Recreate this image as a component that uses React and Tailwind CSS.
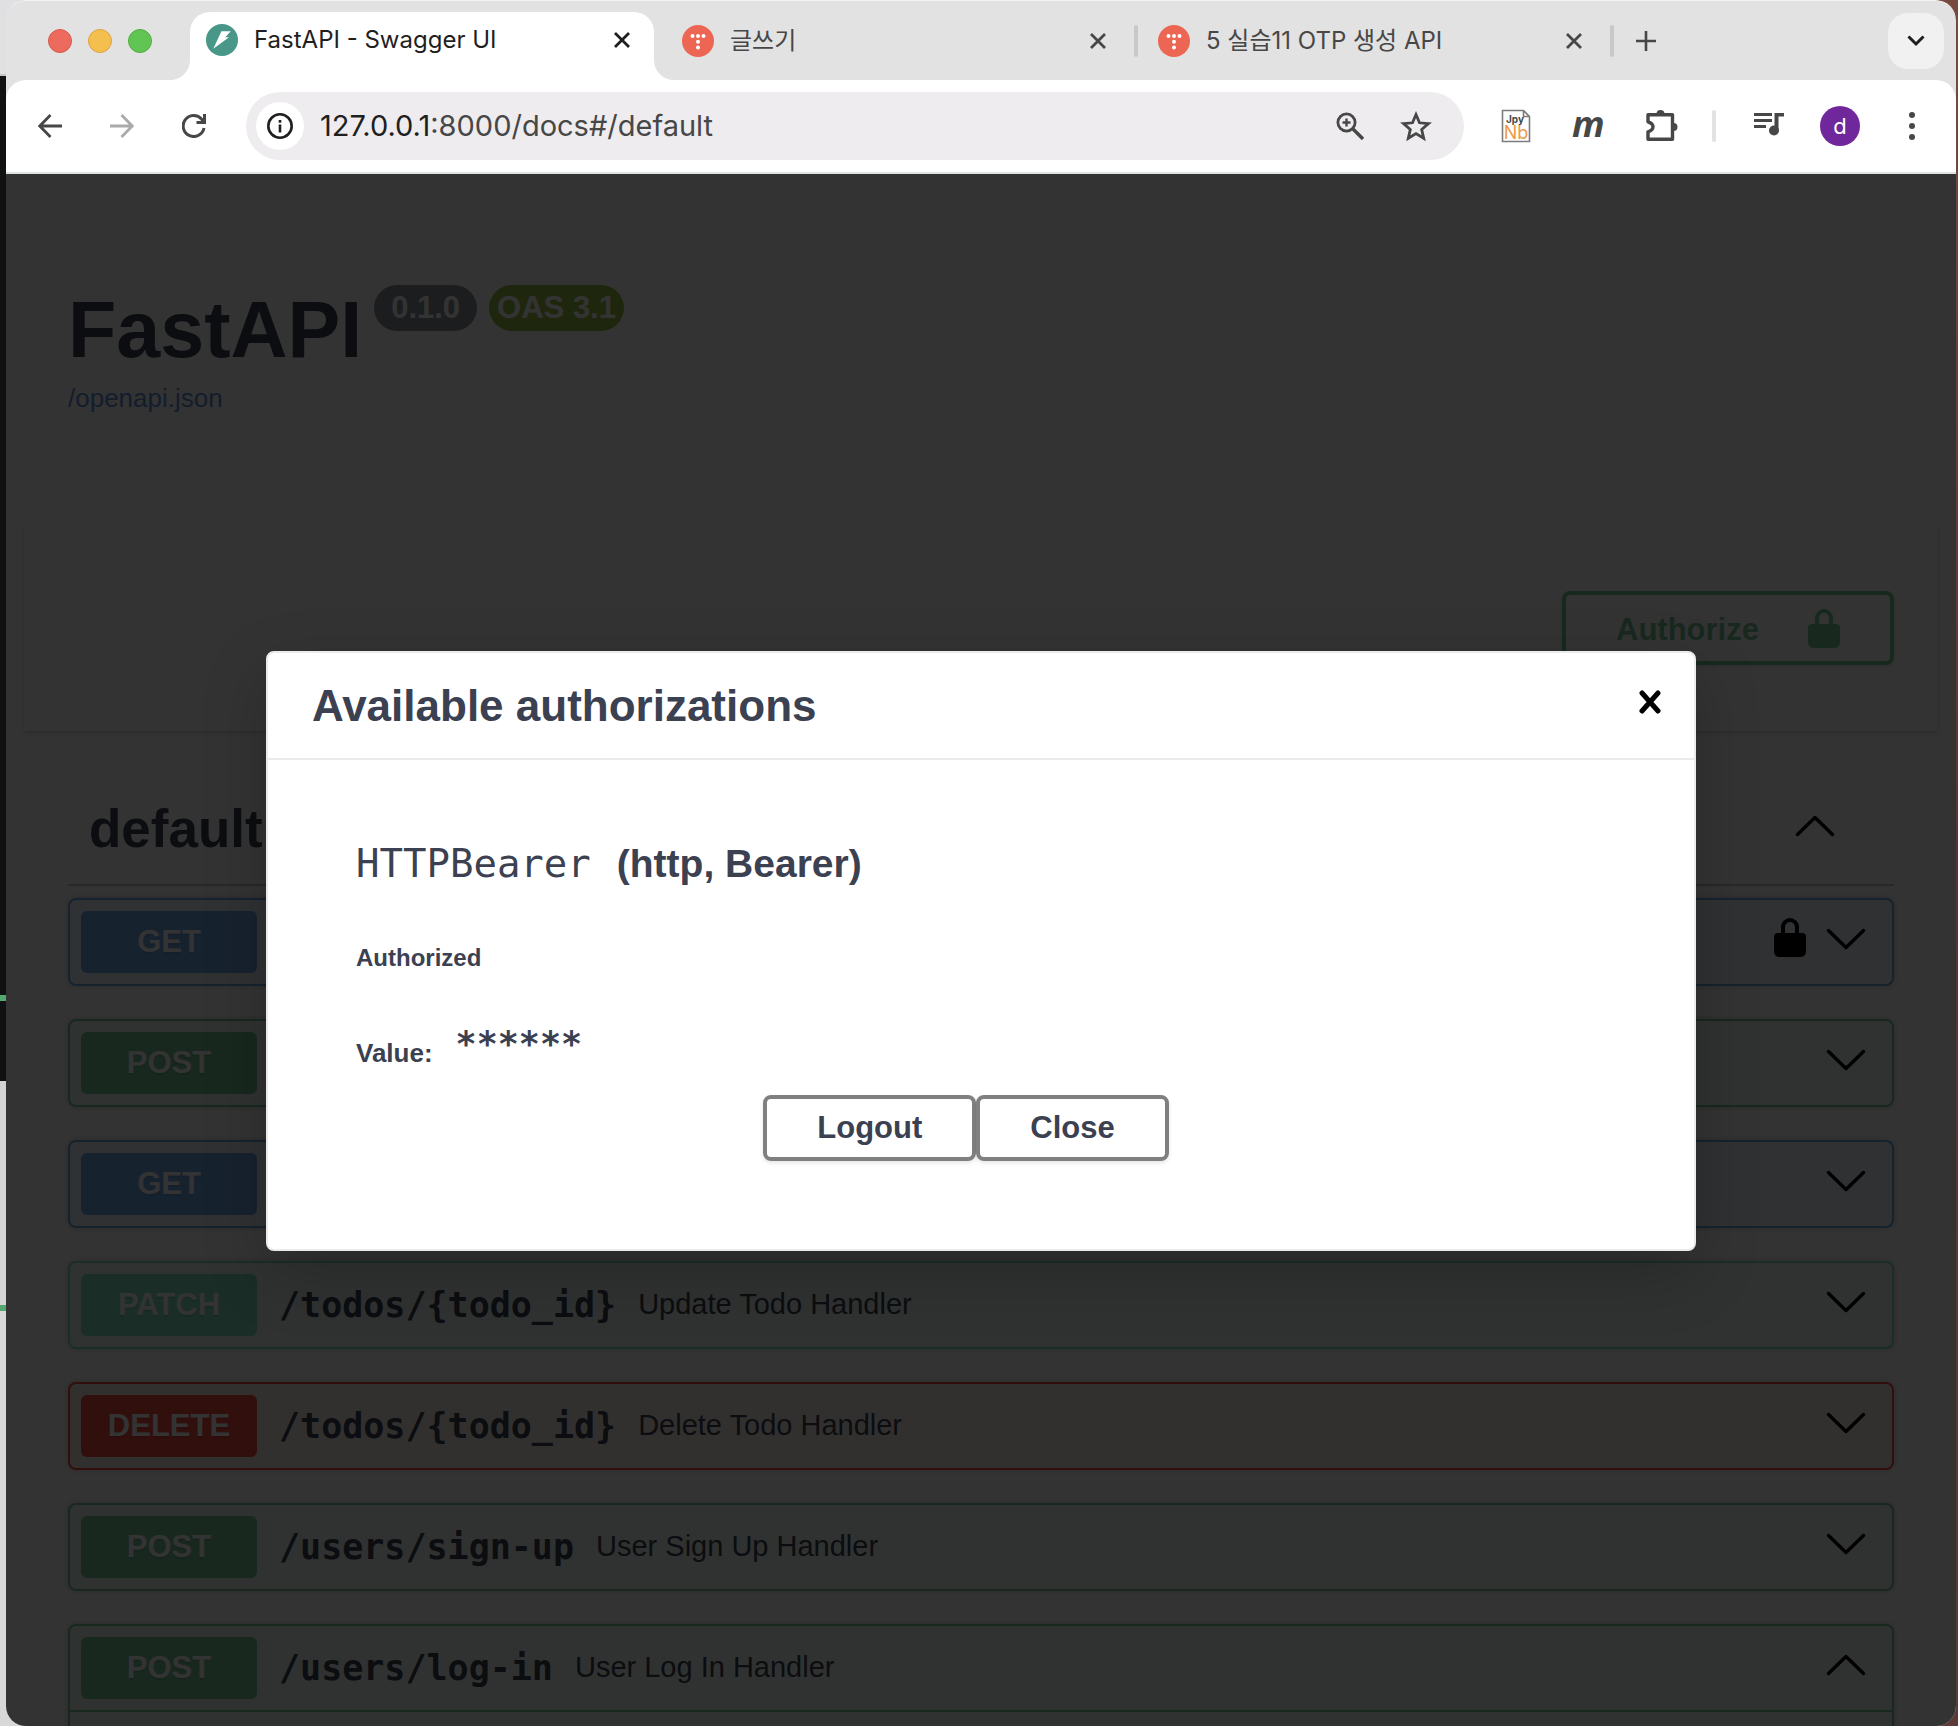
// the first three rows sit behind the dialog, only their badges show
const ENDPOINTS = [
  { method: "GET", locked: true },
  { method: "POST" },
  { method: "GET" },
  { method: "PATCH", path: "/todos/{todo_id}", summary: "Update Todo Handler" },
  { method: "DELETE", path: "/todos/{todo_id}", summary: "Delete Todo Handler" },
  { method: "POST", path: "/users/sign-up", summary: "User Sign Up Handler" },
  { method: "POST", path: "/users/log-in", summary: "User Log In Handler", open: true },
];

const METHOD_STYLES = {
  GET: { box: "border-[#73aaeb] bg-[#ebf3fb]", badge: "bg-[#73aaeb]" },
  POST: { box: "border-[#78c896] bg-[#eff8f2]", badge: "bg-[#78c896]" },
  PATCH: { box: "border-[#82dfc3] bg-[#eef9f6]", badge: "bg-[#82dfc3]" },
  DELETE: { box: "border-[#f04b41] bg-[#faf0e6]", badge: "bg-[#f04b41]" },
};

function CloseIcon({ className }) {
  return (
    <svg viewBox="0 0 16 16" className={className} fill="none" stroke="currentColor" strokeWidth="2.8">
      <path d="M1 1l14 14M15 1L1 15" />
    </svg>
  );
}

function Chevron({ up = false }) {
  return (
    <svg viewBox="0 0 40 22" className="h-[22px] w-10" fill="none" stroke="black" strokeWidth="3.4" strokeLinecap="round" strokeLinejoin="round">
      <path d={up ? "M2.5 19.5L20 2.5l17.5 17" : "M2.5 2.5L20 19.5l17.5-17"} />
    </svg>
  );
}

function Lock({ className }) {
  return (
    <svg viewBox="0 0 32 40" className={className} fill="currentColor">
      <path d="M7 16V10a9 9 0 0 1 18 0v6h3a4 4 0 0 1 4 4v14q0 6-6 6H6q-6 0-6-6V20a4 4 0 0 1 4-4zM11 16h10V10a5 5 0 0 0-10 0z" />
    </svg>
  );
}

function FastApiIcon() {
  return (
    <svg viewBox="0 0 32 32" className="size-8 shrink-0">
      <circle cx="16" cy="16" r="16" fill="#489789" />
      <path d="M15.400 7.300h9.400l-5.800 6h4L7.300 24.800z" fill="white" />
      <path d="M18.200 10.400h3.600l-2.800 2.900z" fill="white" />
    </svg>
  );
}

function TistoryIcon() {
  return (
    <svg viewBox="0 0 32 32" className="size-8 shrink-0">
      <circle cx="16" cy="16" r="16" fill="#ed6653" />
      <g fill="white">
        <circle cx="10.500" cy="11" r="2" />
        <circle cx="16" cy="11" r="2" />
        <circle cx="21.500" cy="11" r="2" />
        <circle cx="16" cy="16.800" r="2" />
        <circle cx="16" cy="22.500" r="2" />
      </g>
    </svg>
  );
}

function Tab({ icon, title }) {
  return (
    <div className="flex h-8 min-w-0 flex-1 items-center pl-5">
      {icon}
      <span className="ml-4 flex-1 truncate text-[#474747]">{title}</span>
      <button type="button" aria-label="Close tab" className="text-[#474747]">
        <CloseIcon className="size-4" />
      </button>
      <span className="ml-7 h-8 w-1 rounded-full bg-[#c8c8c8]" />
    </div>
  );
}

function TabStrip() {
  return (
    <div className="flex h-20 items-center rounded-t-[20px] border-t border-[#f4f4f4] bg-[#e2e2e2] pr-3 pl-[42px] font-[Inter,'Noto_Sans_CJK_KR',sans-serif] text-[24px]">
      <div className="mr-[38px] flex gap-4">
        <span className="size-6 rounded-full border border-[#d8594c] bg-[#ec6a5e]" />
        <span className="size-6 rounded-full border border-[#dba441] bg-[#f5bf4f]" />
        <span className="size-6 rounded-full border border-[#50ae3e] bg-[#61c554]" />
      </div>
      <div className="relative flex h-[68px] w-[464px] items-center self-end rounded-t-[20px] bg-white pr-6 pb-3 pl-4 text-[#1f1f1f]">
        {/* curved feet of the active tab */}
        <svg viewBox="0 0 20 20" className="absolute bottom-0 -left-5 size-5" fill="white">
          <path d="M20 0v20H0A20 20 0 0 0 20 0z" />
        </svg>
        <svg viewBox="0 0 20 20" className="absolute -right-5 bottom-0 size-5" fill="white">
          <path d="M0 0v20h20A20 20 0 0 1 0 0z" />
        </svg>
        <FastApiIcon />
        <span className="ml-4 flex-1 truncate">FastAPI - Swagger UI</span>
        <button type="button" aria-label="Close tab">
          <CloseIcon className="size-4" />
        </button>
      </div>
      <div className="ml-2 flex max-w-[952px] flex-1">
        <Tab icon={<TistoryIcon />} title="글쓰기" />
        <Tab icon={<TistoryIcon />} title="5 실습11 OTP 생성 API" />
      </div>
      <button type="button" aria-label="New tab" className="ml-[22px] text-[#474747]">
        <svg viewBox="0 0 20 20" className="size-5" fill="none" stroke="currentColor" strokeWidth="2.600">
          <path d="M10 0v20M0 10h20" />
        </svg>
      </button>
      <button type="button" aria-label="Search tabs" className="ml-auto flex size-14 items-center justify-center rounded-[20px] bg-[#f1f1f1]">
        <svg viewBox="0 0 18 12" className="h-3 w-[18px]" fill="none" stroke="#1f1f1f" strokeWidth="3">
          <path d="M1.500 1.500L9 9l7.500-7.500" />
        </svg>
      </button>
    </div>
  );
}

function Toolbar() {
  return (
    <div className="bg-[#e2e2e2]">
      <div className="flex h-[94px] items-center rounded-t-[20px] border-b-2 border-[#dfe3df] bg-white pr-[30px] pl-8 text-[#474747]">
        <button type="button" aria-label="Back">
          <svg viewBox="0 0 24 24" className="size-6" fill="none" stroke="currentColor" strokeWidth="2.800">
            <path d="M24 12H2M12.500 1L1.800 12l10.700 11" />
          </svg>
        </button>
        <button type="button" aria-label="Forward" className="ml-12 text-[#aaa]">
          <svg viewBox="0 0 24 24" className="size-6" fill="none" stroke="currentColor" strokeWidth="2.800">
            <path d="M0 12h22M11.500 1l10.700 11-10.700 11" />
          </svg>
        </button>
        <button type="button" aria-label="Reload" className="ml-12">
          <svg viewBox="0 0 24 24" className="size-6" fill="none" stroke="currentColor" strokeWidth="3">
            <path d="M22 14A10.500 10.500 0 1 1 19.500 5l2.500 3M22.500 0v8.500h-8" />
          </svg>
        </button>
        <div className="ml-10 flex h-[68px] flex-1 items-center rounded-full bg-[#eeecee] pr-8 pl-[10px]">
          <button type="button" aria-label="View site information" className="flex size-12 items-center justify-center rounded-full bg-white text-[#1f1f1f]">
            <svg viewBox="0 0 26 26" className="size-[26px]" fill="none" stroke="currentColor" strokeWidth="2.600">
              <circle cx="13" cy="13" r="11.700" />
              <path d="M13 11.500v8M13 7v2.800" />
            </svg>
          </button>
          <div className="ml-4 flex-1 font-[Inter,sans-serif] text-[29px]">
            <span className="text-[#1f1f1f]">127.0.0.1</span>:8000/docs#/default
          </div>
          <button type="button" aria-label="Zoom">
            <svg viewBox="0 0 28 28" className="size-7" fill="none" stroke="currentColor" strokeWidth="2.800">
              <circle cx="10.500" cy="10.500" r="8.600" />
              <path d="M17 17l10 10" strokeWidth="3.400" />
              <path d="M10.500 6.500v8M6.500 10.500h8" strokeWidth="2.400" />
            </svg>
          </button>
          <button type="button" aria-label="Bookmark this tab" className="ml-9">
            <svg viewBox="0 0 32 32" className="size-8" fill="none" stroke="currentColor" strokeWidth="2.800">
              <path d="M16 4.500l3.500 8.300 9 .8-6.800 5.900 2 8.800-7.700-4.700-7.700 4.700 2-8.800-6.800-5.900 9-.8z" />
            </svg>
          </button>
        </div>
        <div className="ml-9 flex items-center">
          <svg viewBox="0 0 32 34" className="h-[34px] w-8 font-[Inter,sans-serif]">
            <path d="M2.500 1.500h21l6 6v25h-27zM23.500 1.500v6h6" fill="white" stroke="#7c7c7c" strokeWidth="1.600" />
            <text x="15" y="14" fontSize="10" fontWeight="700" textAnchor="middle" fill="#474747">Jpy</text>
            <text x="16" y="30" fontSize="18" textAnchor="middle" fill="#ee9a45">Nb</text>
          </svg>
          <span className="ml-10 w-8 pb-1 text-center font-['Open_Sans',sans-serif] text-[36px] leading-9 font-bold italic">m</span>
          <button type="button" aria-label="Extensions" className="ml-10">
            <svg viewBox="0 0 36 34" className="h-[34px] w-9" fill="none" stroke="currentColor" strokeWidth="3.400">
              <path d="M4 5.800h24.500v24.500H4v-7.500q5-1.500 5-5t-5-5z" strokeLinejoin="round" />
              <path d="M12.500 5a4 4 0 0 1 8 0zM29.500 14a4 4 0 0 1 0 8z" fill="currentColor" stroke="none" />
            </svg>
          </button>
          <span className="ml-8 h-8 w-1 rounded-full bg-[#e2e2e2]" />
          <button type="button" aria-label="Media controls" className="ml-[38px]">
            <svg viewBox="0 0 30 28" className="h-7 w-[30px]" fill="currentColor">
              <path d="M0 1h18v3H0zM0 7h18v3H0zM0 13h12v3H0zM20.500 1H30v3.500h-5.500V18h-4z" />
              <circle cx="20" cy="18.500" r="5" />
            </svg>
          </button>
          <button type="button" aria-label="Profile" className="ml-9 size-10 rounded-full bg-[#70279b] font-[Inter,sans-serif] text-[22px] text-white">
            d
          </button>
          <button type="button" aria-label="Menu" className="ml-[38px]">
            <svg viewBox="0 0 28 28" className="size-7" fill="currentColor">
              <circle cx="14" cy="3" r="3" />
              <circle cx="14" cy="14" r="3" />
              <circle cx="14" cy="25" r="3" />
            </svg>
          </button>
        </div>
      </div>
    </div>
  );
}

function Endpoint({ method, path, summary, locked, open }) {
  const style = METHOD_STYLES[method];
  return (
    <div className={`rounded-lg border-2 shadow-[0_0_6px_rgba(0,0,0,0.19)] ${style.box} ${open ? "h-40" : "h-[88px]"}`}>
      <div className={`flex items-center pr-[26px] pl-[11px] ${open ? "h-[86px] border-b-2 border-[#78c896]" : "h-[84px]"}`}>
        <span className={`w-44 shrink-0 rounded-md text-center text-[31px] leading-[62px] font-bold text-white [text-shadow:0_2px_0_rgba(0,0,0,0.1)] ${style.badge}`}>
          {method}
        </span>
        {path && <span className="ml-[22px] font-['DejaVu_Sans_Mono',monospace] text-[35px] font-bold">{path}</span>}
        {summary && <span className="ml-[22px] text-[29px]">{summary}</span>}
        <div className="ml-auto flex items-center gap-5 pb-[6px]">
          {locked && <Lock className="mb-1 h-10 w-8 text-black" />}
          <button type="button" aria-label={open ? "Collapse" : "Expand"}>
            <Chevron up={open} />
          </button>
        </div>
      </div>
    </div>
  );
}

function SwaggerPage() {
  return (
    <div className="pt-[111px] text-[#3b4151]">
      <div className="flex items-start px-[62px]">
        <h1 className="text-[79px] leading-[90px] font-bold">FastAPI</h1>
        <span className="ml-3 rounded-full bg-[#8c9196] px-[17px] text-[31px] leading-[46px] font-bold text-white">0.1.0</span>
        <span className="ml-3 rounded-full bg-[#9bbe46] px-2 text-[31px] leading-[46px] font-bold text-white">OAS 3.1</span>
      </div>
      <a href="#openapi" className="ml-[62px] block w-fit text-[26px] leading-[46px] text-[#5f8fdc]">
        /openapi.json
      </a>
      <div className="mx-[18px] mt-[102px] flex h-[208px] justify-end bg-white px-11 pt-[68px] shadow-[0_2px_4px_rgba(0,0,0,0.15)]">
        <button type="button" className="flex h-[74px] w-[332px] items-center justify-between rounded-lg border-4 border-[#78c896] px-[50px] text-[31px] font-bold text-[#78c896] shadow-[0_2px_4px_rgba(0,0,0,0.1)]">
          <span className="pt-1">Authorize</span>
          <Lock className="h-10 w-8" />
        </button>
      </div>
      <section className="px-[62px] pt-[43px]">
        <div className="flex h-28 items-center justify-between border-b-2 border-[#3b4151]/30 pr-[59px] pl-[21px]">
          <h2 className="text-[53px] font-bold">default</h2>
          <button type="button" aria-label="Collapse section" className="pb-[6px]">
            <Chevron up />
          </button>
        </div>
        <div className="mt-3 flex flex-col gap-[33px]">
          {ENDPOINTS.map((endpoint, i) => (
            <Endpoint key={i} {...endpoint} />
          ))}
        </div>
      </section>
    </div>
  );
}

function AuthDialog() {
  return (
    <div role="dialog" aria-label="Available authorizations" className="h-[600px] w-[1430px] max-w-full rounded-lg border-2 border-[#ebebeb] bg-white text-[#3b4151] shadow-[0_22px_66px_rgba(0,0,0,0.2)]">
      <div className="flex h-[107px] items-center justify-between border-b-2 border-[#ebebeb] pr-8 pl-11">
        <h3 className="text-[44px] font-bold">Available authorizations</h3>
        <button type="button" aria-label="Close dialog" className="pb-2 text-black">
          <svg viewBox="0 0 24 24" className="size-6" fill="none" stroke="currentColor" strokeWidth="5" strokeLinecap="round">
            <path d="M4 3l16 18M20 3L4 21" />
          </svg>
        </button>
      </div>
      <div className="px-[88px] pt-[78px]">
        <h4 className="flex items-baseline text-[39px] leading-[52px] font-bold">
          <code className="mr-[26px] font-['DejaVu_Sans_Mono',monospace] font-normal">HTTPBearer</code>
          (http, Bearer)
        </h4>
        <h6 className="mt-[52px] text-[24px] leading-8 font-bold">Authorized</h6>
        <div className="mt-[50px] flex items-start text-[26px] leading-[58px] font-bold">
          Value:
          <code className="ml-[23px] font-['DejaVu_Sans_Mono',monospace] text-[35px] leading-10">******</code>
        </div>
        <div className="mt-[13px] mr-[30px] flex justify-center">
          {["Logout", "Close"].map((label) => (
            <button key={label} type="button" className="h-[66px] rounded-lg border-4 border-[#808080] px-[50px] text-[31px] leading-[50px] font-bold shadow-[0_2px_4px_rgba(0,0,0,0.1)]">
              {label}
            </button>
          ))}
        </div>
      </div>
    </div>
  );
}

export default function App() {
  return (
    <div className="flex h-screen overflow-hidden bg-linear-to-b from-[#774a40] via-[#5b3336] to-[#5b3a38]">
      {/* windows peeking out on the left */}
      <div className="-mr-6 flex w-[30px] flex-col">
        <div className="h-[76px] border-b-2 border-[#c4c8c4] bg-[#e0dfe1]" />
        <div className="h-[919px] bg-[#0f1113]" />
        <div className="h-[6px] bg-[#55a86d]" />
        <div className="h-20 bg-[#0f1113]" />
        <div className="h-56 bg-[#d4d4d4]" />
        <div className="h-[6px] bg-[#55a86d]" />
        <div className="flex-1 bg-[#d8d8d8]" />
      </div>
      <div className="relative mr-[2px] flex min-w-0 flex-1 flex-col overflow-hidden rounded-[20px] font-['Liberation_Sans',Arial,sans-serif]">
        <TabStrip />
        <Toolbar />
        <main className="relative min-h-0 flex-1 overflow-hidden bg-white">
          <SwaggerPage />
          <div className="absolute inset-0 flex justify-center bg-black/80 pt-[477px]">
            <AuthDialog />
          </div>
        </main>
      </div>
    </div>
  );
}
